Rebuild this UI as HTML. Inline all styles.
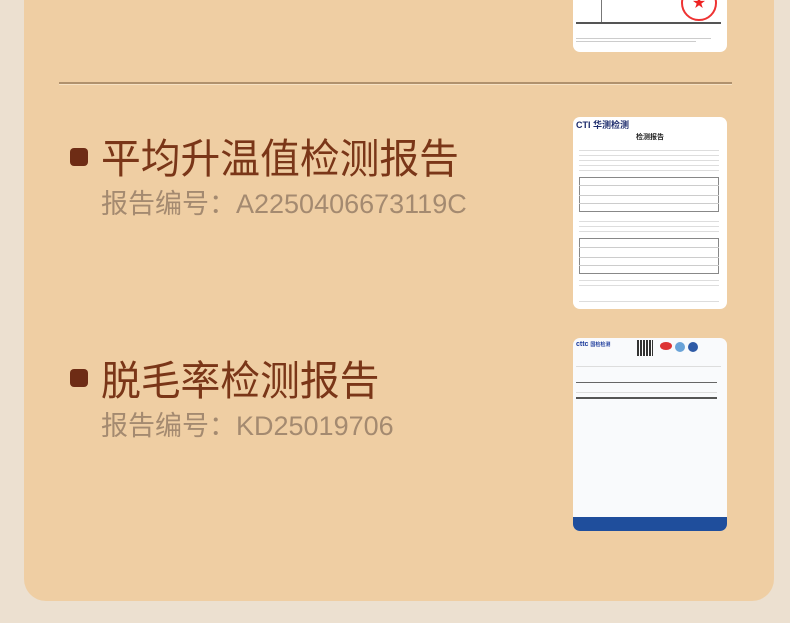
<!DOCTYPE html>
<html><head><meta charset="utf-8"><style>
*{margin:0;padding:0;box-sizing:border-box}
body{width:790px;height:623px;background:#ece0d0;position:relative;overflow:hidden;font-family:"Liberation Sans","Noto Sans CJK SC",sans-serif}
.card{position:absolute;left:24px;top:-30px;width:750px;height:631px;background:#efcea3;border-radius:22px}
.div{position:absolute;left:59px;top:82px;width:673px;height:2px;background:#b0916d;box-shadow:0 1px 0 #f7e2c4}
.b{position:absolute;left:70px;width:18px;height:18px;background:#6e2c15;border-radius:4px}
.t{position:absolute;left:101px;font-size:41px;color:#7a3618;line-height:1;transform:scaleX(0.97);transform-origin:left top;white-space:nowrap}
.s{position:absolute;left:101px;font-size:27px;color:#a48a70;line-height:1;white-space:nowrap}
.doc{position:absolute;left:573px;width:154px;background:#fff;border-radius:7px;overflow:hidden}
.ln{position:absolute;height:1px;background:#bbb}
</style></head><body>
<div class="card"></div>
<div class="doc" style="top:-10px;height:62px">
 <div class="ln" style="left:3px;top:8px;width:145px;background:#777"></div>
 <div class="ln" style="left:3px;top:32px;width:145px;height:2px;background:#555"></div>
 <div class="ln" style="left:28px;top:0;width:1px;height:32px;background:#777"></div>
 <div style="position:absolute;left:108px;top:-5px;width:36px;height:36px;border:2px solid #e33;border-radius:50%;color:#e22;font-size:13px;text-align:center;line-height:32px">★</div>
 <div class="ln" style="left:3px;top:48px;width:135px;background:#ccc"></div>
 <div class="ln" style="left:3px;top:51px;width:120px;background:#ccc"></div>
</div>
<div class="div"></div>
<div class="b" style="top:148px"></div>
<div class="t" style="top:139px">平均升温值检测报告</div>
<div class="s" style="top:191px">报告编号：A2250406673119C</div>
<div class="doc" style="top:117px;height:192px">
 <div style="position:absolute;left:3px;top:1px;font-size:9px;font-weight:bold;color:#1b2a6b">CTI 华测检测</div>
 <div style="position:absolute;left:0;width:100%;top:15px;font-size:7px;text-align:center;font-weight:bold;color:#222">检测报告</div>
 <div class="ln" style="left:6px;top:33px;width:140px;background:#ddd"></div>
 <div class="ln" style="left:6px;top:38px;width:140px;background:#ddd"></div>
 <div class="ln" style="left:6px;top:43px;width:140px;background:#ddd"></div>
 <div class="ln" style="left:6px;top:48px;width:140px;background:#ddd"></div>
 <div class="ln" style="left:6px;top:53px;width:140px;background:#ddd"></div>
 <div style="position:absolute;left:6px;top:60px;width:140px;height:35px;border:1px solid #888"></div>
 <div class="ln" style="left:6px;top:68px;width:140px;background:#ccc"></div>
 <div class="ln" style="left:6px;top:78px;width:140px;background:#ccc"></div>
 <div class="ln" style="left:6px;top:86px;width:140px;background:#ccc"></div>
 <div class="ln" style="left:6px;top:104px;width:140px;background:#ddd"></div>
 <div class="ln" style="left:6px;top:109px;width:140px;background:#ddd"></div>
 <div class="ln" style="left:6px;top:114px;width:140px;background:#ddd"></div>
 <div style="position:absolute;left:6px;top:121px;width:140px;height:36px;border:1px solid #888"></div>
 <div class="ln" style="left:6px;top:130px;width:140px;background:#ccc"></div>
 <div class="ln" style="left:6px;top:140px;width:140px;background:#ccc"></div>
 <div class="ln" style="left:6px;top:148px;width:140px;background:#ccc"></div>
 <div class="ln" style="left:6px;top:163px;width:140px;background:#ddd"></div>
 <div class="ln" style="left:6px;top:168px;width:140px;background:#ddd"></div>
 <div class="ln" style="left:6px;top:184px;width:140px;background:#ddd"></div>
</div>
<div class="b" style="top:369px"></div>
<div class="t" style="top:361px">脱毛率检测报告</div>
<div class="s" style="top:413px">报告编号：KD25019706</div>
<div class="doc" style="top:338px;height:193px;background:#f9fafc">
 <div style="position:absolute;left:3px;top:3px;font-size:7px;font-weight:bold;color:#1b3a9b">cttc <span style="font-size:5px">国检检测</span></div>
 <div style="position:absolute;left:64px;top:2px;width:16px;height:16px;background:repeating-linear-gradient(90deg,#333 0 2px,#fff 2px 3px)"></div>
 <div style="position:absolute;left:87px;top:4px;width:12px;height:8px;border-radius:50%;background:#d33"></div>
 <div style="position:absolute;left:102px;top:4px;width:10px;height:10px;border-radius:50%;background:#6aa3d8"></div>
 <div style="position:absolute;left:115px;top:4px;width:10px;height:10px;border-radius:50%;background:#2e5aa6"></div>
 <div class="ln" style="left:3px;top:28px;width:145px;background:#ddd"></div>
 <div class="ln" style="left:3px;top:44px;width:141px;background:#666"></div>
 <div class="ln" style="left:3px;top:54px;width:141px;background:#ddd"></div>
 <div class="ln" style="left:3px;top:59px;width:141px;height:2px;background:#555"></div>
 <div style="position:absolute;left:0;bottom:0;width:100%;height:14px;background:#1f4e9c"></div>
</div>
</body></html>
